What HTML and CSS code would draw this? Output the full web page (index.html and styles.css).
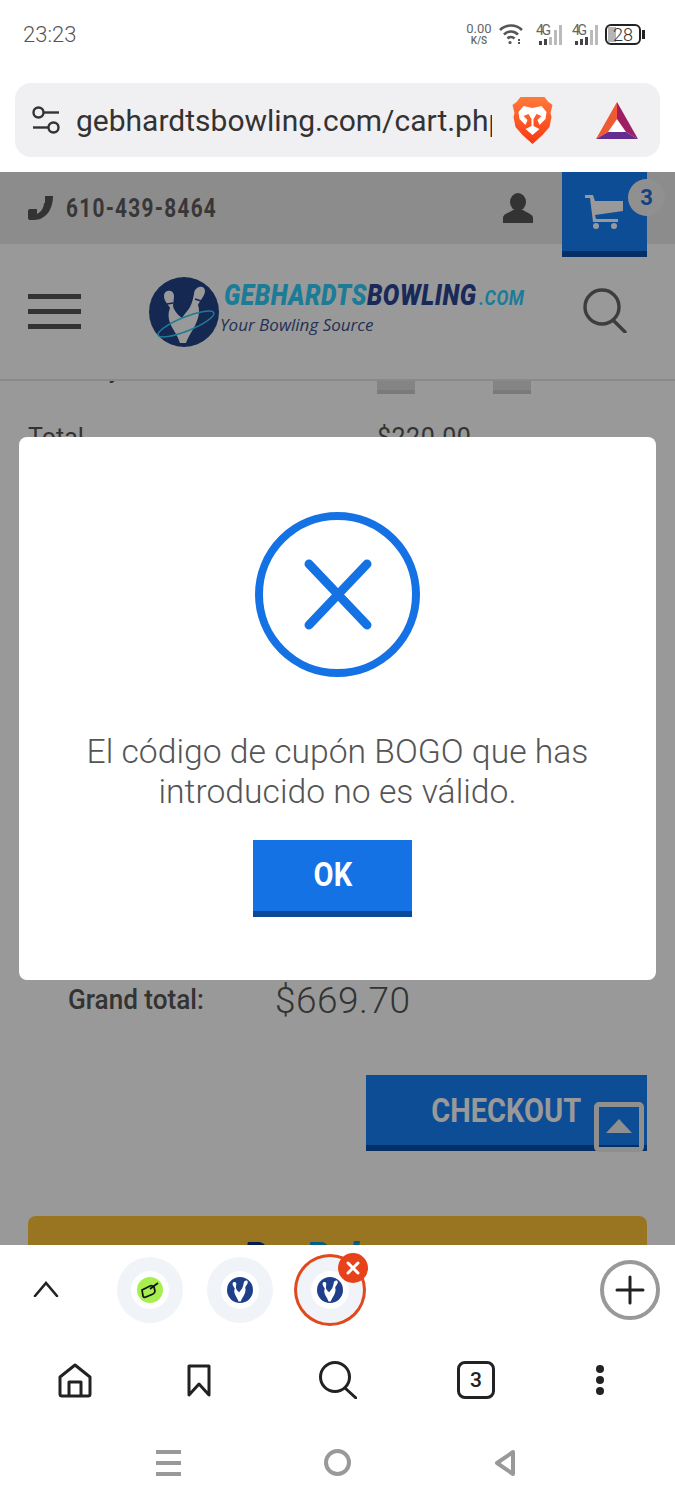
FILE: index.html
```html
<!DOCTYPE html>
<html lang="es">
<head>
  <meta charset="UTF-8" />
  <meta name="viewport" content="width=device-width, initial-scale=1" />
  <title>Gebhardts Bowling - Cart</title>
  <link rel="stylesheet" href="styles.css">
</head>
<body>
  <div class="phone">

    <div class="status-bar">
      <span class="clock">23:23</span>
      <div class="status-icons">
        <div class="net-speed"><span>0.00</span><small>K/S</small></div>
        <svg class="wifi" width="24" height="22" viewBox="0 0 24 22" fill="none" stroke="#555" stroke-width="2.6">
          <path d="M1 7c6-6 16-6 22 0" />
          <path d="M5 11.5c4-4 10-4 14 0" />
          <path d="M8.5 15.5c2-2 5-2 7 0" />
          <circle cx="11" cy="19.5" r="1.6" fill="#555" stroke="none" />
          <path d="M20 16v5" stroke-width="2" stroke-dasharray="2 1" />
        </svg>
        <svg class="signal" width="27" height="22" viewBox="0 0 27 22">
          <text x="0" y="12" font-family="Roboto, sans-serif" font-size="14" fill="#666" textLength="15">4G</text>
          <rect x="3" y="18" width="3" height="4" fill="#444" />
          <rect x="8" y="16" width="3" height="6" fill="#444" />
          <rect x="13" y="14" width="3" height="8" fill="#bbb" />
          <rect x="18" y="7" width="3" height="15" fill="#bbb" />
          <rect x="23" y="2" width="3" height="20" fill="#bbb" />
        </svg>
        <svg class="signal" width="27" height="22" viewBox="0 0 27 22">
          <text x="0" y="12" font-family="Roboto, sans-serif" font-size="14" fill="#666" textLength="15">4G</text>
          <rect x="3" y="18" width="3" height="4" fill="#444" />
          <rect x="8" y="16" width="3" height="6" fill="#444" />
          <rect x="13" y="14" width="3" height="8" fill="#444" />
          <rect x="18" y="7" width="3" height="15" fill="#bbb" />
          <rect x="23" y="2" width="3" height="20" fill="#bbb" />
        </svg>
        <div class="battery"><span class="battery-level"></span><span class="battery-text">28</span></div>
      </div>
    </div>

    <div class="url-bar">
      <svg width="30" height="30" viewBox="0 0 30 30" fill="none" stroke="#333" stroke-width="2.4">
        <circle cx="7.5" cy="7.5" r="5" />
        <path d="M12.5 7.5H28" />
        <circle cx="22.5" cy="22.5" r="5" />
        <path d="M2 22.5H17.5" />
      </svg>
      <div class="url-text">gebhardtsbowling.com/cart.php</div>
      <svg class="brave" width="41" height="47" viewBox="0 0 40 47">
        <defs>
          <linearGradient id="braveFill" x1="0" y1="0" x2="0" y2="1">
            <stop offset="0" stop-color="#ff7a3c" />
            <stop offset="1" stop-color="#f8380f" />
          </linearGradient>
        </defs>
        <path d="M8 0H32L36 5L40 8L38 16L39 20L37 30L30 38L20 47L10 38L3 30L1 20L2 16L0 8L4 5Z" fill="url(#braveFill)" />
        <path d="M6 15L11 9L20 11L29 9L34 15L33 22L27 28L25 23L29 19L24 17L21 22V29L27 32L20 38L13 32L19 29V22L16 17L11 19L15 23L13 28L7 22Z" fill="#fff" />
      </svg>
      <svg class="bat" width="42" height="37" viewBox="0 0 42 37">
        <polygon points="21,17 12,30 30,30" fill="#fff" />
        <polygon points="0,37 21,0 21,17 12,30" fill="#ef5a32" />
        <polygon points="21,0 42,37 30,30 21,17" fill="#9e1f63" />
        <polygon points="0,37 42,37 30,30 12,30" fill="#662d91" />
      </svg>
    </div>

    <div class="webview">
      <div class="site-top">
        <div class="site-phone">
          <svg width="25" height="24" viewBox="0 0 25 24"><path d="M17 0H25C25 13 18 24 6 24H2Q0 24 0 22V15Q0 13 2 13H9V18C14 16 16 10 16 7H17Z" fill="#555" /></svg>
          <span class="phone-number">610-439-8464</span>
        </div>
        <svg class="user-icon" width="30" height="30" viewBox="0 0 30 30">
          <ellipse cx="15" cy="9" rx="8" ry="9" fill="#555" />
          <path d="M0 30V25C0 21 6 20 10 17H20C24 20 30 21 30 25V30Z" fill="#555" />
        </svg>
        <div class="cart-box">
          <svg width="38" height="35" viewBox="0 0 38 35" fill="#fff">
            <path d="M0 1H8L10 7H38V17L10 21L11 25H33V28H8L5 4H0Z" />
            <circle cx="11" cy="32" r="3" />
            <circle cx="29" cy="32" r="3" />
          </svg>
          <span class="cart-count">3</span>
        </div>
      </div>

      <div class="site-header">
        <div class="hamburger"><span></span><span></span><span></span></div>
        <div class="logo">
          <svg width="70" height="70" viewBox="0 0 70 70">
            <circle cx="35" cy="35" r="35" fill="#234488" />
            <path d="M15 19C15 12 25 12 25 19C25 24 23 28 25 32C27 36 30 39 33 41C35 37 39 34 41 30C43 26 44 22 45 17C45 9 56 7 56 14C56 19 51 23 49 28C52 36 48 46 43 54C40 59 38 63 37 66H31C29 60 27 57 24 52C20 45 18 38 21 31C19 27 15 24 15 19Z" fill="#fff" />
            <path d="M18 27L24 26M46 22L52 24" stroke="#234488" stroke-width="1.5" />
            <ellipse cx="37" cy="47" rx="30" ry="7" transform="rotate(-22 37 47)" fill="none" stroke="#2fcffc" stroke-width="1.4" />
          </svg>
          <div class="logo-text">
            <div class="logo-name"><span class="teal">GEBHARDTS</span><span class="navy">BOWLING</span><span class="logo-com">.COM</span></div>
            <div class="logo-slogan">Your Bowling Source</div>
          </div>
        </div>
        <svg class="site-search" width="44" height="45" viewBox="0 0 44 45" fill="none" stroke="#666" stroke-width="3.4">
          <circle cx="19" cy="19" r="17" />
          <path d="M30 32L42 44" stroke-linecap="round" />
        </svg>
      </div>

      <div class="cart-content">
        <div class="cart-row">
          <span class="qty-label">Quantity</span>
          <div class="qty">
            <span class="qty-btn"></span>
            <span class="qty-value">1</span>
            <span class="qty-btn"></span>
          </div>
        </div>
        <div class="cart-row total-row">
          <span>Total</span>
          <span class="row-price">$220.00</span>
        </div>
        <div class="grand-total">
          <span class="grand-label">Grand total:</span>
          <span class="grand-value">$669.70</span>
        </div>
        <div class="checkout-wrap">
          <button class="checkout"><span>CHECKOUT</span></button>
        </div>
        <div class="paypal"><span class="pay">Pay</span><span class="pal">Pal</span></div>
      </div>

      <div class="scroll-top"><span></span></div>

      <div class="overlay">
        <div class="modal">
          <svg class="modal-icon" width="165" height="165" viewBox="0 0 165 165" fill="none" stroke="#1572e4" stroke-width="8">
            <circle cx="82.5" cy="82.5" r="78.5" />
            <path d="M54 52L112 113M112 52L54 113" stroke-linecap="round" stroke-width="9" />
          </svg>
          <p class="modal-text">El código de cupón BOGO que has introducido no es válido.</p>
          <button class="ok-btn"><span>OK</span></button>
        </div>
      </div>
    </div>

    <div class="tab-strip">
      <svg class="chevron" width="26" height="16" viewBox="0 0 26 16" fill="none" stroke="#222" stroke-width="2.6" stroke-linecap="round">
        <path d="M2 15L13 2L24 15" />
      </svg>
      <div class="tab">
        <span class="tab-inner">
          <span class="favicon green">
            <svg width="20" height="20" viewBox="0 0 20 20" fill="none" stroke="#111" stroke-width="1.7">
              <path d="M2 10L10 6Q12 5 14 7L15 11Q15 13 13 14L6 17Q4 18 3 16Z" />
              <path d="M10 9L18 3" />
            </svg>
          </span>
        </span>
      </div>
      <div class="tab">
        <span class="tab-inner">
          <span class="favicon navy-bg">
            <svg width="26" height="26" viewBox="0 0 70 70" fill="#fff"><path d="M15 19C15 12 25 12 25 19C25 24 23 28 25 32C27 36 30 39 33 41C35 37 39 34 41 30C43 26 44 22 45 17C45 9 56 7 56 14C56 19 51 23 49 28C52 36 48 46 43 54C40 59 38 63 37 66H31C29 60 27 57 24 52C20 45 18 38 21 31C19 27 15 24 15 19Z" /></svg>
          </span>
        </span>
      </div>
      <div class="tab tab-active">
        <span class="tab-inner">
          <span class="favicon navy-bg">
            <svg width="26" height="26" viewBox="0 0 70 70" fill="#fff"><path d="M15 19C15 12 25 12 25 19C25 24 23 28 25 32C27 36 30 39 33 41C35 37 39 34 41 30C43 26 44 22 45 17C45 9 56 7 56 14C56 19 51 23 49 28C52 36 48 46 43 54C40 59 38 63 37 66H31C29 60 27 57 24 52C20 45 18 38 21 31C19 27 15 24 15 19Z" /></svg>
          </span>
        </span>
        <span class="tab-close">
          <svg width="16" height="16" viewBox="0 0 16 16" stroke="#fff" stroke-width="3" stroke-linecap="round"><path d="M3 3L13 13M13 3L3 13" /></svg>
        </span>
      </div>
      <div class="new-tab">
        <svg width="30" height="30" viewBox="0 0 30 30" stroke="#222" stroke-width="3" stroke-linecap="round"><path d="M15 2V28M2 15H28" /></svg>
      </div>
    </div>

    <div class="nav-row">
      <svg width="34" height="35" viewBox="0 0 34 35" fill="none" stroke="#222" stroke-width="3" stroke-linejoin="round">
        <path d="M2 14L17 2L32 14V31Q32 33 30 33H4Q2 33 2 31Z" />
        <path d="M11 33V19H23V33" />
      </svg>
      <svg width="24" height="33" viewBox="0 0 24 33" fill="none" stroke="#222" stroke-width="3" stroke-linejoin="round">
        <path d="M2 2H22V31L12 20L2 31Z" />
      </svg>
      <svg width="38" height="38" viewBox="0 0 38 38" fill="none" stroke="#222" stroke-width="3">
        <circle cx="16" cy="16" r="14.5" />
        <path d="M26 27L37 37" stroke-linecap="round" />
      </svg>
      <div class="tab-count">3</div>
      <div class="dots"><span></span><span></span><span></span></div>
    </div>

    <div class="system-nav">
      <div class="sys-menu"><span></span><span></span><span></span></div>
      <div class="sys-home"></div>
      <svg width="22" height="28" viewBox="0 0 22 28" fill="none" stroke="#999" stroke-width="4" stroke-linejoin="round">
        <path d="M19 3V25L3 14Z" />
      </svg>
    </div>

  </div>
</body>
</html>
```

FILE: styles.css
```css
* {
  box-sizing: border-box;
}
body {
  margin: 0;
  background: white;
  font-family: Roboto, Arial, sans-serif;
}
.phone {
  width: 675px;
  height: 1500px;
  display: flex;
  flex-direction: column;
  overflow: hidden;
}

/* status bar */
.status-bar {
  height: 68px;
  display: flex;
  justify-content: space-between;
  align-items: center;
  padding: 0 34px 0 23px;
}
.clock {
  font-size: 22px;
  font-weight: 300;
  color: #555;
}
.status-icons {
  display: flex;
  align-items: center;
}
.net-speed {
  display: flex;
  flex-direction: column;
  align-items: center;
  width: 26px;
  color: #666;
  font-size: 13px;
  line-height: 12px;
}
.net-speed small {
  font-size: 10px;
  line-height: 11px;
  font-weight: 500;
}
.wifi {
  margin: 0 13px 0 7px;
}
.signal {
  margin-right: 9px;
}
.signal + .signal {
  margin-right: 6px;
}
.battery {
  position: relative;
  width: 36px;
  height: 21px;
  border: 2px solid #222;
  border-radius: 6px;
  text-align: center;
  font-size: 18px;
  line-height: 17px;
  font-weight: 300;
  color: #333;
}
.battery::after {
  content: "";
  position: absolute;
  right: -6px;
  top: 4px;
  width: 3px;
  height: 9px;
  background: #222;
}
.battery-level {
  position: absolute;
  left: 1px;
  top: 1px;
  bottom: 1px;
  width: 8px;
  background: #b5b5b5;
}
.battery-text {
  position: relative;
}

/* address bar */
.url-bar {
  height: 74px;
  margin: 15px 15px 15px;
  padding: 0 0 0 16px;
  background: #f0eff1;
  border-radius: 16px;
  display: flex;
  align-items: center;
}
.url-text {
  width: 416px;
  margin-left: 15px;
  overflow: hidden;
  white-space: nowrap;
  font-size: 30px;
  color: #333;
}
.brave {
  margin-left: 20px;
}
.bat {
  margin-left: 43px;
}

/* web page under the dialog */
.webview {
  position: relative;
  height: 1073px;
  overflow: hidden;
  background: white;
  flex-shrink: 0;
}
.site-top {
  height: 72px;
  background: #e9e9e9;
  display: flex;
  align-items: center;
  padding-left: 28px;
  position: relative;
  z-index: 1;
}
.site-phone {
  display: flex;
  align-items: center;
  gap: 13px;
}
.phone-number {
  display: inline-block;
  width: 151px;
  font-size: 26px;
  font-weight: 700;
  letter-spacing: 1.6px;
  color: #5c5c5c;
  white-space: nowrap;
  transform: scaleX(.8);
  transform-origin: left;
}
.user-icon {
  margin-left: 286px;
  margin-top: -1px;
}
.cart-box {
  position: relative;
  width: 85px;
  height: 85px;
  margin-left: 29px;
  align-self: flex-start;
  background: #1680f8;
  border-bottom: 6px solid #0a4fa8;
  padding: 22px 0 0 23px;
}
.cart-count {
  position: absolute;
  left: 66px;
  top: 7px;
  width: 37px;
  height: 37px;
  border-radius: 50%;
  background: #f0f0f0;
  color: #1f6fd8;
  font-size: 22px;
  font-weight: 700;
  line-height: 37px;
  text-align: center;
}
.site-header {
  height: 137px;
  background: white;
  border-bottom: 2px solid #e4e4e4;
  display: flex;
  align-items: center;
  padding-left: 28px;
  position: relative;
}
.hamburger {
  width: 53px;
  display: flex;
  flex-direction: column;
  gap: 10px;
}
.hamburger span {
  height: 5px;
  background: #555;
}
.logo {
  display: flex;
  align-items: center;
  margin-left: 68px;
  width: 434px;
}
.logo-text {
  margin-left: 1px;
  margin-top: -11px;
}
.logo-name {
  font-size: 29px;
  font-weight: 900;
  font-style: italic;
  line-height: 34px;
  letter-spacing: .6px;
  white-space: nowrap;
  transform: scaleX(.85);
  transform-origin: left;
  margin-left: 4px;
}
.teal {
  color: #2fcffc;
}
.navy {
  color: #2b4696;
}
.logo-com {
  color: #2fcffc;
  font-size: 21px;
  font-weight: 700;
  margin-left: 3px;
}
.logo-slogan {
  font-family: "Open Sans", sans-serif;
  font-style: italic;
  font-size: 17px;
  line-height: 20px;
  margin-top: 0;
  color: #3a5290;
}
.site-search {
  margin-top: -2px;
}

.cart-content {
  padding: 0 28px;
}
.cart-row {
  display: grid;
  grid-template-columns: 349px auto;
  font-size: 25px;
  color: #555;
  margin-top: -18px;
  line-height: 30px;
}
.qty-label {
  margin-top: -8px;
}
.qty {
  display: flex;
  align-items: flex-end;
  height: 31px;
}
.qty-btn {
  width: 38px;
  height: 31px;
  background: #dcdcdc;
  border-bottom: 4px solid #ccc;
}
.qty-value {
  width: 78px;
  margin-bottom: 7px;
  text-align: center;
  line-height: 30px;
}
.total-row {
  margin-top: 29px;
}
.row-price {
  letter-spacing: .5px;
}
.grand-total {
  display: grid;
  grid-template-columns: 207px auto;
  align-items: center;
  padding-left: 40px;
  margin-top: 525px;
  height: 44px;
}
.grand-label {
  font-size: 27px;
  font-weight: 500;
  color: #555;
  white-space: nowrap;
  transform: scaleX(.967);
  transform-origin: left;
}
.grand-value {
  font-size: 37px;
  font-weight: 300;
  letter-spacing: .5px;
  color: #555;
}
.checkout-wrap {
  display: flex;
  justify-content: flex-end;
  margin-top: 53px;
}
.checkout {
  width: 281px;
  height: 76px;
  border: none;
  border-bottom: 6px solid #0a4fa8;
  background: #1680f8;
  color: white;
  font-family: inherit;
  font-size: 33px;
  font-weight: 700;
  padding: 0;
}
.checkout span {
  display: inline-block;
  transform: scaleX(.88);
}
.paypal {
  margin-top: 65px;
  height: 60px;
  background: #ffc439;
  border-radius: 8px;
  padding: 19px 0 0 215px;
  font-size: 38px;
  font-weight: 900;
  font-style: italic;
  line-height: 44px;
}
.pay {
  color: #003087;
}
.pal {
  color: #009cde;
}
.scroll-top {
  position: absolute;
  left: 594px;
  top: 930px;
  width: 50px;
  height: 50px;
  border: 5px solid #eee;
  border-radius: 5px;
  display: flex;
  align-items: center;
  justify-content: center;
}
.scroll-top span {
  width: 0;
  height: 0;
  margin-top: -2px;
  border-left: 13px solid transparent;
  border-right: 13px solid transparent;
  border-bottom: 14px solid #eee;
}

/* dialog */
.overlay {
  position: absolute;
  inset: 0;
  z-index: 2;
  background: rgba(0,0,0,0.4);
  display: flex;
  align-items: center;
  justify-content: center;
}
.modal {
  width: 637px;
  height: 543px;
  background: white;
  border-radius: 8px;
  padding-top: 75px;
  display: flex;
  flex-direction: column;
  align-items: center;
}
.modal-text {
  width: 560px;
  margin: 55px 0 28px;
  font-size: 33.7px;
  font-weight: 300;
  line-height: 40px;
  text-align: center;
  color: #555;
}
.ok-btn {
  width: 159px;
  height: 77px;
  margin-right: 10px;
  border: none;
  border-bottom: 6px solid #0b4a9a;
  background: #1572e4;
  color: white;
  font-family: inherit;
  font-size: 33px;
  font-weight: 700;
  padding: 0 0 2px;
}
.ok-btn span {
  display: inline-block;
  transform: scaleX(.88);
}

/* browser bottom bars */
.tab-strip {
  height: 90px;
  background: white;
  display: flex;
  align-items: center;
  padding-left: 33px;
  position: relative;
}
.chevron {
  margin-right: 58px;
  margin-top: -2px;
}
.tab {
  position: relative;
  width: 66px;
  height: 66px;
  margin-right: 24px;
  border-radius: 50%;
  background: #f0f3f8;
  display: flex;
  align-items: center;
  justify-content: center;
}
.tab-active {
  box-shadow: 0 0 0 3px #e0481d;
}
.tab-inner {
  width: 38px;
  height: 38px;
  border-radius: 50%;
  background: white;
  display: flex;
  align-items: center;
  justify-content: center;
}
.favicon {
  width: 26px;
  height: 26px;
  border-radius: 50%;
  display: flex;
  align-items: center;
  justify-content: center;
}
.green {
  background: #a6ef4e;
}
.navy-bg {
  background: #1f3f8a;
}
.tab-close {
  position: absolute;
  left: 41px;
  top: -4px;
  width: 30px;
  height: 30px;
  border-radius: 50%;
  background: #e8421a;
  display: flex;
  align-items: center;
  justify-content: center;
}
.new-tab {
  width: 60px;
  height: 60px;
  margin-left: auto;
  margin-right: 15px;
  border: 4px solid #999;
  border-radius: 50%;
  display: flex;
  align-items: center;
  justify-content: center;
}
.nav-row {
  height: 90px;
  display: grid;
  grid-template-columns: 150px 98px 180px 96px 151px;
  align-items: center;
  justify-items: center;
}
.tab-count {
  width: 38px;
  height: 38px;
  border: 3px solid #222;
  border-radius: 8px;
  font-size: 21px;
  font-weight: 500;
  line-height: 32px;
  text-align: center;
  color: #222;
}
.dots {
  display: flex;
  flex-direction: column;
  gap: 3px;
}
.dots span {
  width: 8px;
  height: 8px;
  border-radius: 50%;
  background: #222;
}
.system-nav {
  height: 75px;
  display: flex;
  align-items: center;
  justify-content: center;
  gap: 143px;
  padding-right: 4px;
}
.sys-menu {
  width: 25px;
  display: flex;
  flex-direction: column;
  gap: 7px;
}
.sys-menu span {
  height: 4px;
  background: #999;
}
.sys-home {
  width: 27px;
  height: 27px;
  border: 4px solid #999;
  border-radius: 50%;
}
```
